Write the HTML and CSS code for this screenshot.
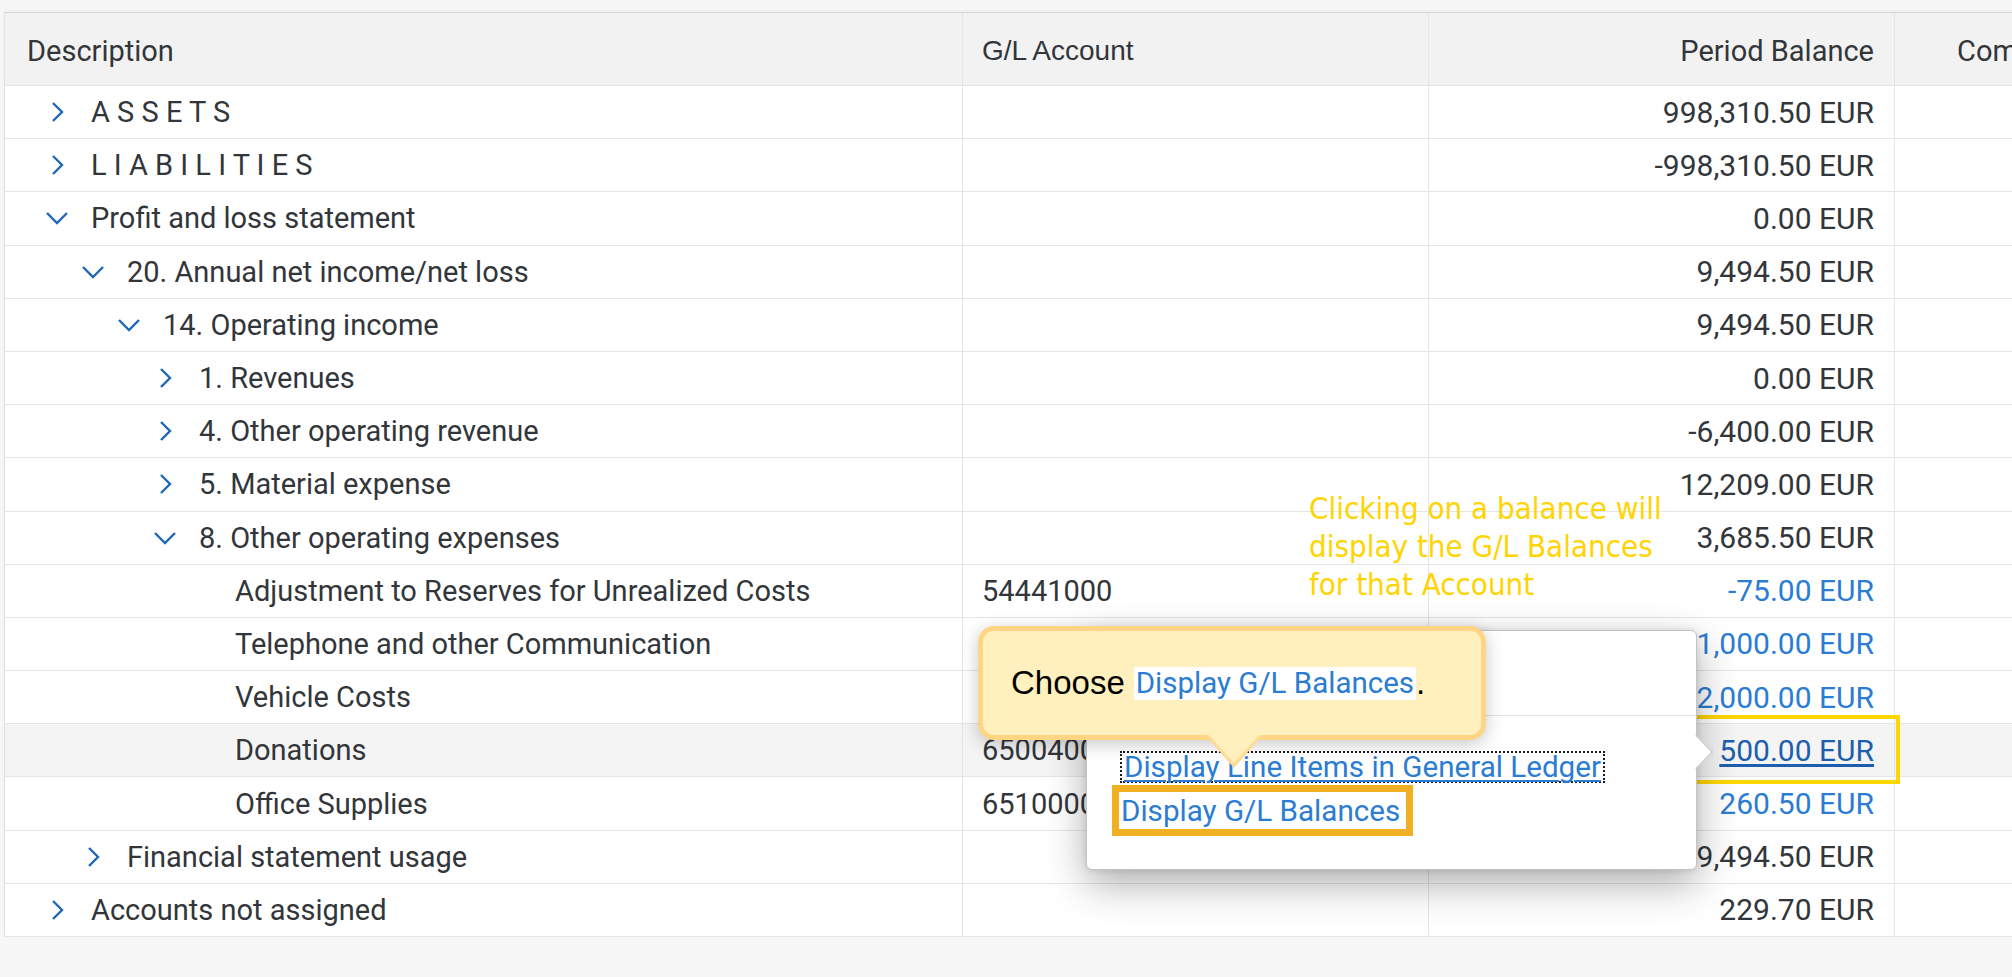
FILE: index.html
```html
<!DOCTYPE html>
<html>
<head>
<meta charset="utf-8">
<link rel="stylesheet" href="styles.css">
</head>
<body>
<div class="page">
  <div class="table">
    <div class="row head">
      <div class="cell c1">Description</div>
      <div class="cell c2 arial">G/L Account</div>
      <div class="cell c3">Period Balance</div>
      <div class="cell c4">Company Code</div>
    </div>

    <div class="row">
      <div class="cell c1 tree l0"><span class="tw"><svg class="chev-r" viewBox="0 0 14 20"><path d="M3 1l9 9-9 9"/></svg></span><span>A S S E T S</span></div>
      <div class="cell c2"></div><div class="cell c3">998,310.50 EUR</div><div class="cell c4"></div>
    </div>
    <div class="row">
      <div class="cell c1 tree l0"><span class="tw"><svg class="chev-r" viewBox="0 0 14 20"><path d="M3 1l9 9-9 9"/></svg></span><span>L I A B I L I T I E S</span></div>
      <div class="cell c2"></div><div class="cell c3">-998,310.50 EUR</div><div class="cell c4"></div>
    </div>
    <div class="row">
      <div class="cell c1 tree l0"><span class="tw"><svg class="chev-d" viewBox="0 0 22 14"><path d="M1 2l10 10 10-10"/></svg></span><span>Profit and loss statement</span></div>
      <div class="cell c2"></div><div class="cell c3">0.00 EUR</div><div class="cell c4"></div>
    </div>
    <div class="row">
      <div class="cell c1 tree l1"><span class="tw"><svg class="chev-d" viewBox="0 0 22 14"><path d="M1 2l10 10 10-10"/></svg></span><span>20. Annual net income/net loss</span></div>
      <div class="cell c2"></div><div class="cell c3">9,494.50 EUR</div><div class="cell c4"></div>
    </div>
    <div class="row">
      <div class="cell c1 tree l2"><span class="tw"><svg class="chev-d" viewBox="0 0 22 14"><path d="M1 2l10 10 10-10"/></svg></span><span>14. Operating income</span></div>
      <div class="cell c2"></div><div class="cell c3">9,494.50 EUR</div><div class="cell c4"></div>
    </div>
    <div class="row">
      <div class="cell c1 tree l3"><span class="tw"><svg class="chev-r" viewBox="0 0 14 20"><path d="M3 1l9 9-9 9"/></svg></span><span>1. Revenues</span></div>
      <div class="cell c2"></div><div class="cell c3">0.00 EUR</div><div class="cell c4"></div>
    </div>
    <div class="row">
      <div class="cell c1 tree l3"><span class="tw"><svg class="chev-r" viewBox="0 0 14 20"><path d="M3 1l9 9-9 9"/></svg></span><span>4. Other operating revenue</span></div>
      <div class="cell c2"></div><div class="cell c3">-6,400.00 EUR</div><div class="cell c4"></div>
    </div>
    <div class="row">
      <div class="cell c1 tree l3"><span class="tw"><svg class="chev-r" viewBox="0 0 14 20"><path d="M3 1l9 9-9 9"/></svg></span><span>5. Material expense</span></div>
      <div class="cell c2"></div><div class="cell c3">12,209.00 EUR</div><div class="cell c4"></div>
    </div>
    <div class="row">
      <div class="cell c1 tree l3"><span class="tw"><svg class="chev-d" viewBox="0 0 22 14"><path d="M1 2l10 10 10-10"/></svg></span><span>8. Other operating expenses</span></div>
      <div class="cell c2"></div><div class="cell c3">3,685.50 EUR</div><div class="cell c4"></div>
    </div>
    <div class="row">
      <div class="cell c1 tree l4"><span class="tw"></span><span>Adjustment to Reserves for Unrealized Costs</span></div>
      <div class="cell c2">54441000</div><div class="cell c3 link">-75.00 EUR</div><div class="cell c4"></div>
    </div>
    <div class="row">
      <div class="cell c1 tree l4"><span class="tw"></span><span>Telephone and other Communication</span></div>
      <div class="cell c2">54450000</div><div class="cell c3 link">1,000.00 EUR</div><div class="cell c4"></div>
    </div>
    <div class="row">
      <div class="cell c1 tree l4"><span class="tw"></span><span>Vehicle Costs</span></div>
      <div class="cell c2">54600000</div><div class="cell c3 link">2,000.00 EUR</div><div class="cell c4"></div>
    </div>
    <div class="row hover">
      <div class="cell c1 tree l4"><span class="tw"></span><span>Donations</span></div>
      <div class="cell c2">65004000</div><div class="cell c3 link active">500.00 EUR</div><div class="cell c4"></div>
    </div>
    <div class="row">
      <div class="cell c1 tree l4"><span class="tw"></span><span>Office Supplies</span></div>
      <div class="cell c2">65100000</div><div class="cell c3 link">260.50 EUR</div><div class="cell c4"></div>
    </div>
    <div class="row">
      <div class="cell c1 tree l1"><span class="tw"><svg class="chev-r" viewBox="0 0 14 20"><path d="M3 1l9 9-9 9"/></svg></span><span>Financial statement usage</span></div>
      <div class="cell c2"></div><div class="cell c3">9,494.50 EUR</div><div class="cell c4"></div>
    </div>
    <div class="row">
      <div class="cell c1 tree l0"><span class="tw"><svg class="chev-r" viewBox="0 0 14 20"><path d="M3 1l9 9-9 9"/></svg></span><span>Accounts not assigned</span></div>
      <div class="cell c2"></div><div class="cell c3">229.70 EUR</div><div class="cell c4"></div>
    </div>
  </div>

  <div class="note">Clicking on a balance will<br>display the G/L Balances<br>for that Account</div>

  <div class="target"></div>

  <div class="popover">
    <div class="pop-head"></div>
    <div class="pop-body">
      <a class="pop-link focus">Display Line Items in General Ledger</a>
      <div class="pop-mark"><a class="pop-link plain">Display G/L Balances</a></div>
    </div>
    <div class="pop-arrow"></div>
  </div>

  <div class="callout">
    <span class="choose">Choose</span><span class="hl">Display G/L Balances</span><span class="dot">.</span>
  </div>
</div>
</body>
</html>
```

FILE: styles.css
```css
* { box-sizing: border-box; }
html, body { margin: 0; padding: 0; }
body {
  width: 2012px;
  height: 977px;
  overflow: hidden;
  background: #f7f7f7;
  font-family: Roboto, "Liberation Sans", sans-serif;
  font-size: 29px;
  color: #32363a;
}
.page {
  position: relative;
  width: 2012px;
  height: 977px;
  padding: 12px 0 0 4px;
}
.table {
  width: 2200px;
  background: #fff;
  border-top: 1px solid #d6d6d6;
  border-left: 1px solid #e2e2e2;
  box-shadow: 0 -1px 3px rgba(0,0,0,0.06);
}
.row {
  display: grid;
  grid-template-columns: 958px 466px 466px 310px;
  height: 53.2px;
  border-bottom: 1px solid #e5e5e5;
}
.row.head {
  height: 73px;
  background: #f2f2f2;
}
.head .cell { padding-top: 4px; }
.row.hover { background: #f4f4f4; }
.cell {
  display: flex;
  align-items: center;
  border-right: 1px solid #e5e5e5;
  white-space: nowrap;
  overflow: hidden;
}
.c1 { padding-left: 22px; }
.c2 { padding-left: 19px; }
.c3 { justify-content: flex-end; padding-right: 20px; font-size: 30px; }
.head .c3 { font-size: 29px; }
.c4 { padding-left: 62px; border-right: none; }
.arial { font-family: "Liberation Sans", Arial, sans-serif; font-size: 28px; }
.tree { padding-left: 33px; }
.tree.l1 { padding-left: 69px; }
.tree.l2 { padding-left: 105px; }
.tree.l3 { padding-left: 141px; }
.tree.l4 { padding-left: 177px; }
.tw {
  width: 37px;
  flex: none;
  margin-right: 16px;
  display: flex;
  justify-content: center;
  align-items: center;
}
.tw svg path { fill: none; stroke: #1f67b5; stroke-width: 2.4; }
.chev-r { width: 14px; height: 20px; }
.chev-d { width: 22px; height: 14px; }
.link { color: #2b7cd3; }
.link.active { color: #1d5fae; text-decoration: underline; text-underline-offset: 3px; }

.note {
  position: absolute;
  left: 1309px;
  top: 489px;
  font-family: "DejaVu Sans Condensed", "DejaVu Sans", sans-serif;
  font-size: 31px;
  line-height: 38px;
  color: #ffd400;
}
.target {
  position: absolute;
  left: 1657px;
  top: 715px;
  width: 243px;
  height: 69px;
  border: 4px solid #ffd700;
}
.popover {
  position: absolute;
  left: 1086px;
  top: 630px;
  width: 611px;
  height: 240px;
  background: #fff;
  border: 1px solid #c4c4c4;
  border-radius: 6px;
  box-shadow: 0 14px 40px rgba(0,0,0,0.32), 0 0 6px rgba(0,0,0,0.12);
}
.pop-head {
  height: 85px;
  border-bottom: 1px solid #e2e2e2;
}
.pop-body {
  padding: 35px 0 0 25px;
  display: flex;
  flex-direction: column;
  align-items: flex-start;
}
.pop-link {
  display: block;
  color: #2b7cd3;
  font-size: 29.6px;
  line-height: 28px;
  white-space: nowrap;
}
.pop-link.focus {
  margin-left: 8px;
  padding: 0 2px;
  border: 2px dotted #1a1a1a;
  text-decoration: underline;
  text-underline-offset: 3px;
  text-decoration-thickness: 2px;
}
.pop-mark {
  margin-top: 2px;
  border: 7px solid #f0b024;
  background: #fff;
  height: 51px;
  display: flex;
  align-items: center;
  padding: 0 6px 0 2px;
}
.pop-arrow {
  position: absolute;
  right: -12px;
  top: 109px;
  width: 24px;
  height: 24px;
  background: #fff;
  border-top: 1px solid #c4c4c4;
  border-right: 1px solid #c4c4c4;
  transform: rotate(45deg);
}

.callout {
  position: absolute;
  left: 978px;
  top: 626px;
  width: 508px;
  height: 114px;
  background: #fff0be;
  border: 5px solid #ffd583;
  border-radius: 16px;
  box-shadow: 0 4px 18px rgba(0,0,0,0.22);
  display: flex;
  align-items: center;
  padding-left: 28px;
}
.callout::before {
  content: "";
  position: absolute;
  left: 222px;
  bottom: -33px;
  border-left: 29px solid transparent;
  border-right: 29px solid transparent;
  border-top: 33px solid #ffdc96;
}
.callout::after {
  content: "";
  position: absolute;
  left: 226px;
  bottom: -28px;
  border-left: 25px solid transparent;
  border-right: 25px solid transparent;
  border-top: 28px solid #fff0be;
}
.choose, .dot {
  font-family: "Liberation Sans", Arial, sans-serif;
  font-size: 33px;
  color: #000;
}
.choose { margin-right: 9px; }
.hl {
  background: #fff;
  color: #2b7cd3;
  font-size: 29.5px;
  line-height: 33px;
  padding: 0 2px;
}
```
